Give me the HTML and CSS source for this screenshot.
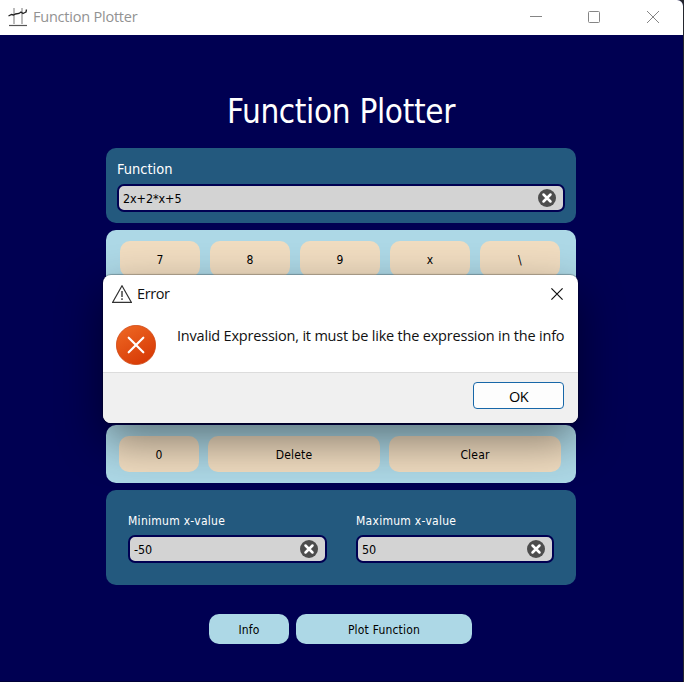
FILE: index.html
```html
<!DOCTYPE html>
<html lang="en">
<head>
<meta charset="utf-8">
<title>Function Plotter</title>
<link rel="stylesheet" href="styles.css">
</head>
<body>
<svg width="0" height="0" class="defs">
  <symbol id="clear" viewBox="0 0 18 18"><circle cx="9" cy="9" r="9" fill="#4d4d4d"/><path d="M5.500 5.500l7 7M12.500 5.500l-7 7" stroke="#fff" stroke-width="2.500" stroke-linecap="round"/></symbol>
</svg>
<div class="window">
  <header class="titlebar">
    <svg class="app-icon" width="20" height="20" viewBox="0 0 20 20" fill="none"><path d="M6 1v16M14 1v16" stroke="#b5b5b5" stroke-width="1.800"/><path d="M1 18.500h18" stroke="#555" stroke-width="1.200"/><path d="M.5 9l3-1.500 2 .5 2-1 3.500-.5 2-1.500 2 1.500 2-1 1-.5.500-2.500" stroke="#222" stroke-width="1.300"/></svg>
    <span class="window-name">Function Plotter</span>
    <svg class="controls" width="132" height="14" viewBox="0 0 132 14" fill="none" stroke="#858585"><path d="M0 6.500h12"/><rect x="58.500" y="1.500" width="11" height="11" rx="1"/><path d="M117 1l12 12M129 1l-12 12"/></svg>
  </header>
  <main class="content">
    <h1>Function Plotter</h1>
    <section class="panel function">
      <label>Function</label>
      <div class="field"><span>2x+2*x+5</span><svg width="18" height="18"><use href="#clear"/></svg></div>
    </section>
    <section class="keys digits">
      <button>7</button><button>8</button><button>9</button><button>x</button><button>\</button>
    </section>
    <section class="keys editing">
      <button>0</button><button>Delete</button><button>Clear</button>
    </section>
    <section class="panel range">
      <div><label>Minimum x-value</label><div class="field"><span>-50</span><svg width="18" height="18"><use href="#clear"/></svg></div></div>
      <div><label>Maximum x-value</label><div class="field"><span>50</span><svg width="18" height="18"><use href="#clear"/></svg></div></div>
    </section>
    <footer class="actions"><button>Info</button><button>Plot Function</button></footer>
  </main>
</div>
<div class="dialog" role="alertdialog">
  <div class="dialog-title">
    <svg width="20" height="18" viewBox="0 0 20 18" fill="none"><path d="M10 .8L19.300 17.300H.7z" stroke="#333" stroke-width="1.200"/><path d="M10 6v6M10 13.300v1.700" stroke="#444" stroke-width="1.500"/></svg>
    <span>Error</span>
    <svg class="close" width="12" height="12" viewBox="0 0 12 12"><path d="M.4.4l11.200 11.200M11.600.4L.4 11.600" stroke="#111" stroke-width="1.200"/></svg>
  </div>
  <div class="message">
    <svg width="40" height="40" viewBox="0 0 40 40"><defs><linearGradient id="red" x1="0" y1="0" x2=".6" y2="1"><stop stop-color="#ef6a25"/><stop offset="1" stop-color="#d83c07"/></linearGradient></defs><circle cx="20" cy="20" r="19.600" fill="url(#red)" stroke="#cf4510" stroke-width=".8"/><path d="M12.700 12.700l14.600 14.600M27.300 12.700L12.700 27.300" stroke="#fff" stroke-width="2.200" stroke-linecap="round"/></svg>
    <p>Invalid Expression, it must be like the expression in the info</p>
  </div>
  <div class="dialog-actions"><button><span>OK</span></button></div>
</div>
</body>
</html>
```
FILE: styles.css
```css
* { box-sizing: border-box; }
body { margin: 0; width: 684px; height: 682px; overflow: hidden; background: #24262d; font: 12px "DejaVu Sans Condensed", "DejaVu Sans", sans-serif; font-stretch: condensed; letter-spacing: .2px; }
button { border: 0; padding: 2px 0 0; margin: 0; font: inherit; letter-spacing: inherit; color: #000; }
svg { display: block; flex: none; }
.defs { position: absolute; }
.window { width: 683px; height: 682px; background: #000052; border-radius: 0 6px 0 0; overflow: hidden; border-bottom: 1px solid #000038; }
.titlebar { height: 35px; background: #fff; display: flex; align-items: center; padding: 0 21px 2px 8px; }
.window-name { margin-left: 5px; font: 14.5px "Open Sans", sans-serif; color: #929292; letter-spacing: -.22px; }
.controls { margin-left: auto; }
.content { width: 470px; margin-left: 106px; padding-top: 52px; }
h1 { margin: 0; height: 61px; line-height: 50px; text-align: center; font-size: 33px; font-weight: 400; color: #fff; letter-spacing: -.35px; }
.panel { background: #23597e; border-radius: 10px; color: #fff; }
.panel label { display: block; }
.function { height: 75px; padding: 12px 11px; }
.function label { font-size: 14.5px; line-height: 18px; letter-spacing: 0; margin-bottom: 6px; }
.field { height: 28px; border: 2px solid #000052; border-radius: 7px; background: #d3d3d3; color: #000; display: flex; align-items: center; justify-content: space-between; padding: 0 7px 0 4px; font-size: 12.5px; letter-spacing: -.1px; }
.keys { display: grid; background: #add8e6; border-radius: 10px; align-content: start; margin-top: 7px; }
.keys button { height: 36px; border-radius: 10px; background: #f0dcc0; }
.digits { height: 188px; padding: 11px 14px; grid-template-columns: repeat(5, 80px); gap: 10px; }
.editing { height: 58px; padding: 11px 13px; grid-template-columns: 80px 172px 172px; gap: 9px; }
.range { height: 95px; margin-top: 7px; padding: 23px 22px 22px; display: grid; grid-template-columns: 199px 198px; gap: 29px; }
.range label { line-height: 17px; margin-bottom: 5px; font-size: 12px; letter-spacing: .28px; }
.actions { display: flex; gap: 7px; margin: 29px 0 0 103px; }
.actions button { height: 30px; border-radius: 10px; background: #add8e6; width: 80px; }
.actions button + button { width: 176px; }
.dialog { position: absolute; left: 103px; top: 275px; width: 475px; height: 148px; border-radius: 8px; background: #fff; box-shadow: 0 0 1px 1px #0004, 0 18px 46px #0007; overflow: hidden; font: 14.5px "Open Sans", sans-serif; color: #111; }
.dialog-title { height: 37px; display: flex; align-items: center; padding: 0 15px 0 9px; }
.dialog-title span { margin-left: 5px; letter-spacing: -.4px; }
.dialog-title .close { margin-left: auto; }
.message { height: 60px; padding: 13px 0 0 13px; display: flex; }
.message p { margin: 0 0 0 21px; line-height: 22px; white-space: nowrap; letter-spacing: -.2px; }
.dialog-actions { height: 51px; background: #f0f0f0; border-top: 1px solid #dcdcdc; padding: 9px 14px; display: flex; justify-content: flex-end; }
.dialog-actions button { width: 91px; height: 27px; border: 1px solid #1767a8; border-radius: 4px; background: #fdfdfd; letter-spacing: -.5px; }
```
